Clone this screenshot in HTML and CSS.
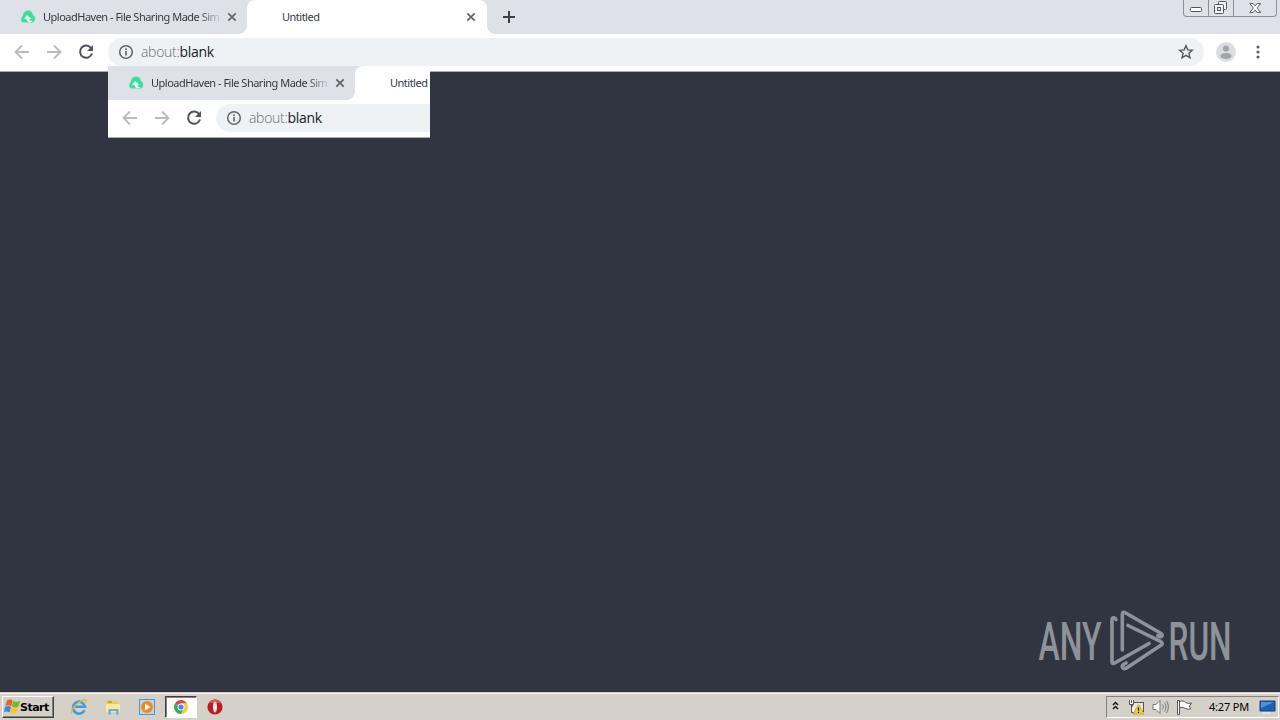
FILE: index.html
```
<!DOCTYPE html>
<html lang="en">
<head>
    <meta charset="UTF-8">
    <title>Untitled</title>
    <link rel="stylesheet" href="styles.css">
</head>
<body>
    <!-- shared icons -->
    <svg class="defs" width="0" height="0">
        <symbol id="cloud" viewBox="0 0 16 16">
            <path d="M4 13.500C2 13.500 1 12 1.300 10 1.500 8.500 2 7.500 3 7 3 3.800 5 1.500 8 1.500c3 0 4.700 2 5 4.500 2 1 2.500 2.800 2 4.500-.3 2-1.500 3-3 3z" fill="#3fdca0"/>
            <path d="M7 6l4.500 4H9.300c.3 1.500 1.500 2 3.500 2.200-2.500 2-5.800 1.500-6.300-2.200H4z" fill="#e6f5f1"/>
        </symbol>
        <symbol id="close" viewBox="0 0 10 10"><path d="M1.300 1.300l7.400 7.400M8.700 1.300L1.300 8.700" stroke="#606367" stroke-width="1.700"/></symbol>
        <symbol id="back" viewBox="0 0 16 16"><path d="M15 8H2M8 1.500L1.500 8 8 14.500" fill="none" stroke="#b9bbbe" stroke-width="1.800"/></symbol>
        <symbol id="reload" viewBox="0 0 16 16">
            <path d="M13.200 4.200A6.100 6.100 0 1 0 14 9.500" fill="none" stroke="#505357" stroke-width="2"/>
            <path d="M15 1v6H9z" fill="#505357"/>
        </symbol>
        <symbol id="info" viewBox="0 0 16 16">
            <circle cx="8" cy="8" r="6.300" fill="none" stroke="#5f6368" stroke-width="1.500"/>
            <path d="M8 7v4.500M8 4.300v1.700" stroke="#5f6368" stroke-width="1.600"/>
        </symbol>
    </svg>

    <div class="desktop">
        <div class="browser">
            <div class="tabstrip">
                <div class="tab">
                    <svg class="favicon"><use href="#cloud"/></svg>
                    <span class="tab-title">UploadHaven - File Sharing Made Sim</span>
                    <svg class="tab-close"><use href="#close"/></svg>
                </div>
                <div class="tab active">
                    <span class="tab-title">Untitled</span>
                    <svg class="tab-close"><use href="#close"/></svg>
                </div>
                <svg class="new-tab" viewBox="0 0 12 12"><path d="M6 0v12M0 6h12" stroke="#3c4043" stroke-width="2"/></svg>
                <div class="window-buttons">
                    <span class="win-min"><svg width="13" height="6"><rect x=".5" y=".5" width="11" height="4" rx="1" fill="#fff" stroke="#50545c"/></svg></span>
                    <span class="win-restore"><svg width="14" height="14"><g fill="#f4f5f7" stroke="#50545c"><rect x="4.500" y=".5" width="8" height="8" rx="1"/><rect x=".5" y="3.500" width="9" height="9" rx="1"/><rect x="3.500" y="6.500" width="3" height="3"/></g></svg></span>
                    <span class="win-close"><svg width="13" height="11"><path d="M.7.500h3.500l2 2.500 2-2.500h3.500L8 5l3.700 4.500H8.200L6.200 7l-2 2.500H.7L4.400 5z" fill="#fff" stroke="#50545c" stroke-width=".9"/></svg></span>
                </div>
            </div>
            <div class="toolbar">
                <svg class="nav"><use href="#back"/></svg>
                <svg class="nav forward"><use href="#back"/></svg>
                <svg class="nav"><use href="#reload"/></svg>
                <div class="omnibox">
                    <svg class="info"><use href="#info"/></svg>
                    <span class="url">about:<b>blank</b></span>
                    <svg class="star" viewBox="0 0 16 16"><path d="M8 1.700l1.800 4.200 4.600.4-3.500 3 1.100 4.500L8 11.400l-4 2.400 1.100-4.500-3.500-3 4.600-.4z" fill="none" stroke="#53575c" stroke-width="1.400"/></svg>
                </div>
                <svg class="avatar" viewBox="0 0 20 20"><circle cx="10" cy="10" r="10" fill="#dcdddf"/><circle cx="10" cy="6.500" r="3.100" fill="#a3a4a6"/><ellipse cx="10" cy="13.900" rx="5.600" ry="3" fill="#a3a4a6"/></svg>
                <svg class="menu" viewBox="0 0 4 14"><g fill="#55585c"><circle cx="2" cy="2" r="1.500"/><circle cx="2" cy="7" r="1.500"/><circle cx="2" cy="12" r="1.500"/></g></svg>
            </div>
        </div>

        <!-- stale piece of the window painted over the page -->
        <div class="ghost">
            <div class="tabstrip">
                <div class="tab">
                    <svg class="favicon"><use href="#cloud"/></svg>
                    <span class="tab-title">UploadHaven - File Sharing Made Sim</span>
                    <svg class="tab-close"><use href="#close"/></svg>
                </div>
                <div class="tab active">
                    <span class="tab-title">Untitled</span>
                </div>
            </div>
            <div class="toolbar">
                <svg class="nav"><use href="#back"/></svg>
                <svg class="nav forward"><use href="#back"/></svg>
                <svg class="nav"><use href="#reload"/></svg>
                <div class="omnibox">
                    <svg class="info"><use href="#info"/></svg>
                    <span class="url">about:<b>blank</b></span>
                </div>
            </div>
        </div>

        <svg class="watermark" width="200" height="66" viewBox="1037 608 200 66">
            <text x="1038.500" y="659.500" textLength="63" lengthAdjust="spacingAndGlyphs">ANY</text>
            <g fill="none" stroke="#8e9299" stroke-width="3.600" stroke-linejoin="round" stroke-linecap="round">
                <path d="M1116 619.500c-1-2.500-4-2.500-4 .5v41.500c0 2 1 2.500 2.700 1.500L1149 643.500"/>
                <path d="M1122.300 650V614.500c0-2.200 1.300-2.800 3-1.800l35.500 20.500c3 2 .5 5-3 2.500"/>
                <path d="M1128 625.500L1160.500 641.300c2.300 1.200 2.300 3 0 4.300L1126.500 668c-3.500 2.200-5.500-1.500-3-3.500L1126 663"/>
            </g>
            <text x="1168.500" y="659.500" textLength="63" lengthAdjust="spacingAndGlyphs">RUN</text>
        </svg>

        <div class="taskbar">
            <div class="start">
                <svg width="17" height="16" viewBox="0 0 17 16">
                    <path d="M3 1.500c2-1.500 4-1.300 5.800 0L7.200 7.300C5 6 3.500 6 1.300 7z" fill="#e8622a"/>
                    <path d="M9.200 2c2 1.200 4.500 1.100 7-.3L14.500 7.400c-2.500 1.400-4.800 1.300-6.800.2z" fill="#79b82e"/>
                    <path d="M1.100 7.700c2.200-1.100 3.900-1 5.900.2L5.400 13.500c-2-1.200-3.700-1.200-5.400-.2z" fill="#3e86d8"/>
                    <path d="M7.500 8.200c2 1.200 4.300 1.200 6.800-.1L12.700 13.700c-2.500 1.300-4.800 1.200-6.800.1z" fill="#f8c62b"/>
                </svg>
                <span>Start</span>
            </div>
            <div class="quick">
                <svg viewBox="0 0 18 18">
                    <path d="M14.500 12.300A6 6 0 1 1 15 8.700H5" fill="none" stroke="#3a9fe0" stroke-width="2.600"/>
                    <path d="M2 15.800C-.8 13 7 4.500 13 2.200c3-1.200 4.200.3 2.800 2.500" fill="none" stroke="#e6b93c" stroke-width="1.400"/>
                </svg>
                <svg viewBox="0 0 18 18">
                    <path d="M2 2h5l1 1.500h7V14H2z" fill="#efc85f"/>
                    <path d="M2 6h14v8H2z" fill="#fbe89f"/>
                    <path d="M4.500 16.500V11h10v5.500h-2.500V13H7v3.500z" fill="#63b2dc"/>
                    <path d="M4 4h4" stroke="#50a050"/>
                </svg>
                <svg viewBox="0 0 18 18">
                    <rect x="1.500" y="1.500" width="15" height="15" fill="#b9d6ee" stroke="#5795cc"/>
                    <circle cx="9" cy="9" r="6" fill="#f28a16"/>
                    <path d="M7 5.500l5.500 3.500L7 12.500z" fill="#fff"/>
                </svg>
                <div class="pressed">
                    <svg viewBox="0 0 18 18">
                        <path d="M9 9L3 5.500A7 7 0 0 1 15 5.500H9z" fill="#dd4b3e"/>
                        <path d="M9 9V5.500h6A7 7 0 0 1 9 16l3-5.300z" fill="#f7cb3c"/>
                        <path d="M9 9l3 1.700L9 16A7 7 0 0 1 3 5.500z" fill="#3ba55c"/>
                        <circle cx="9" cy="9" r="3.500" fill="#fff"/>
                        <circle cx="9" cy="9" r="2.600" fill="#4285f4"/>
                    </svg>
                </div>
                <svg viewBox="0 0 18 18">
                    <circle cx="9" cy="9" r="7.600" fill="#b91d20"/>
                    <path d="M3 5a7 7 0 0 1 12 0z" fill="#d95552"/>
                    <ellipse cx="9" cy="9" rx="2" ry="5.500" fill="#f6e9e5"/>
                </svg>
            </div>
            <div class="tray">
                <svg class="chevrons" viewBox="0 0 7 9"><path d="M1 4l2.500-2.500L6 4M1 8l2.500-2.500L6 8" fill="none" stroke="#111" stroke-width="1.400"/></svg>
                <svg class="network" viewBox="0 0 17 16">
                    <rect x="4.500" y="3.500" width="11" height="9" fill="#e8e6e0" stroke="#555"/>
                    <path d="M1.500 1v4.500h4V1M3.500 1v3M3.500 6v7.500H8" fill="#fff" stroke="#555"/>
                    <path d="M10.500 5.500L16 15H5z" fill="#f6d32d" stroke="#b8960f" stroke-width=".7"/>
                    <path d="M10.500 8.500v3.300M10.500 12.700v1.300" stroke="#222" stroke-width="1.300"/>
                </svg>
                <svg class="volume" viewBox="0 0 17 16">
                    <path d="M1 5.500h3l4-4v13l-4-4H1z" fill="#fff" stroke="#777"/>
                    <path d="M10.500 5.500c1 1.500 1 3.500 0 5M12.500 3.500c2 3 2 6 0 9M14.500 2c2.500 4 2.500 8 0 12" fill="none" stroke="#777"/>
                </svg>
                <svg class="flag" viewBox="0 0 17 16"><path d="M1.500 15.500V1.500h2v14zM3.500 2.500c3-1 4.500-.5 6 1 2 1 4 1 6 .5l-2 3 1 3c-3 .5-4 0-6-1s-3-1-5 0z" fill="#fff" stroke="#555"/></svg>
                <span class="clock">4:27 PM</span>
                <svg class="monitor" viewBox="0 0 17 14">
                    <path d="M1 1h15v10H1z" fill="#1d61b7" stroke="#163c75"/>
                    <path d="M2 2h13L2 8z" fill="#4b94dc"/>
                    <path d="M4 13h8" stroke="#dfe7ef" stroke-width="1.500"/>
                </svg>
            </div>
        </div>
    </div>
</body>
</html>
```
FILE: styles.css
```
body {
    margin: 0;
    font-family: "Noto Sans", sans-serif;
    background: #313541;
    overflow: hidden;
}

svg {
    display: block;
    flex: none;
}

.defs {
    position: absolute;
}

.desktop {
    position: relative;
    display: flex;
    flex-direction: column;
    height: 720px;
}

.tabstrip {
    display: flex;
    height: 34px;
    background: #dee1e7;
}

.tab {
    display: flex;
    align-items: center;
    box-sizing: border-box;
    flex: none;
    width: 247px;
    padding: 0 10px 0 20px;
}

.tab.active {
    position: relative;
    width: 240px;
    padding: 0 11px 0 35px;
    border-radius: 8px 8px 0 0;
    background: #fff;
}

/* curved feet of the active tab */
.tab.active::before,
.tab.active::after {
    content: "";
    position: absolute;
    bottom: 0;
    width: 8px;
    height: 8px;
}

.tab.active::before {
    left: -8px;
    background: radial-gradient(circle at 0 0, #dee1e7 7.5px, #fff 8px);
}

.tab.active::after {
    right: -8px;
    background: radial-gradient(circle at 100% 0, #dee1e7 7.5px, #fff 8px);
}

.favicon {
    width: 16px;
    height: 16px;
    margin-right: 7px;
}

.tab-title {
    padding-bottom: 2px;
    white-space: nowrap;
    font-size: 11px;
    letter-spacing: -0.5px;
    color: #35383c;
}

/* long titles fade out before the close button */
.favicon + .tab-title {
    -webkit-mask-image: linear-gradient(to right, #000 155px, transparent 180px);
}

.tab-close {
    width: 10px;
    height: 10px;
    margin-left: auto;
}

.new-tab {
    width: 12px;
    height: 12px;
    margin: 11px 0 0 16px;
}

.window-buttons {
    display: flex;
    box-sizing: border-box;
    width: 94px;
    height: 17px;
    margin: 0 3px 0 auto;
    border: 1px solid #8b8f98;
    border-top: none;
    border-radius: 0 0 4px 4px;
}

.window-buttons span {
    display: flex;
    justify-content: center;
    align-items: center;
}

.win-min {
    width: 24px;
    padding-top: 4px;
    border-right: 1px solid #8b8f98;
}

.win-restore {
    width: 24px;
    border-right: 1px solid #8b8f98;
}

.win-close {
    flex: 1;
}

.toolbar {
    display: flex;
    align-items: center;
    box-sizing: border-box;
    height: 38px;
    padding: 0 20px 1px 14px;
    border-bottom: 1px solid #a9abaf;
    background: #fff;
}

.nav {
    width: 16px;
    height: 16px;
    margin-right: 16px;
}

.forward {
    transform: scaleX(-1);
}

.omnibox {
    display: flex;
    align-items: center;
    box-sizing: border-box;
    flex: 1;
    height: 28px;
    margin-left: -2px;
    padding: 0 10px;
    border-radius: 14px;
    background: #eff2f5;
}

.info {
    width: 16px;
    height: 16px;
    margin-right: 7px;
}

.url {
    padding-bottom: 2px;
    font-family: "Open Sans", sans-serif;
    font-size: 14px;
    font-weight: 300;
    letter-spacing: -0.3px;
    color: #686c71;
}

.url b {
    font-weight: 400;
    color: #17191c;
}

.star {
    width: 16px;
    height: 16px;
    margin-left: auto;
}

.avatar {
    width: 20px;
    height: 20px;
    margin-left: 12px;
}

.menu {
    width: 4px;
    height: 14px;
    margin-left: 20px;
}

.ghost {
    position: absolute;
    left: 108px;
    top: 66px;
    width: 322px;
    height: 72px;
    overflow: hidden;
}

.ghost .toolbar {
    padding-right: 0;
}

.ghost .omnibox {
    border-radius: 14px 0 0 14px;
}

.watermark {
    position: absolute;
    left: 1037px;
    top: 608px;
}

.watermark text {
    font-family: Roboto, sans-serif;
    font-size: 53px;
    font-weight: 500;
    fill: #8e9299;
}

.taskbar {
    display: flex;
    align-items: center;
    box-sizing: border-box;
    height: 28px;
    margin-top: auto;
    padding: 2px 1px 0 2px;
    background: #d5d1c9;
    box-shadow: inset 0 1px #d5d1c9, inset 0 2px #f7f5f1;
}

.start {
    display: flex;
    align-items: center;
    box-sizing: border-box;
    width: 52px;
    height: 22px;
    padding-left: 1px;
    border: 1px solid;
    border-color: #fff #404040 #404040 #fff;
    box-shadow: inset -1px -1px #85827c;
    font-family: "DejaVu Sans", sans-serif;
    font-size: 11px;
    font-weight: bold;
    letter-spacing: -0.5px;
    color: #000;
}

.start span {
    margin-left: -1px;
}

.quick {
    display: flex;
    align-items: center;
    margin-left: 16px;
}

.quick svg {
    width: 18px;
    height: 18px;
    margin-right: 16px;
}

.pressed {
    display: flex;
    justify-content: center;
    align-items: center;
    box-sizing: border-box;
    width: 32px;
    height: 22px;
    margin: 0 9px 0 -7px;
    border: 1px solid;
    border-color: #404040 #fff #fff #404040;
    box-shadow: inset 1px 1px #85827c;
    background: #fdfdfc;
}

.pressed svg {
    margin: 0;
}

.tray {
    display: flex;
    align-items: center;
    box-sizing: border-box;
    width: 173px;
    height: 22px;
    margin-left: auto;
    padding: 0 2px 0 5px;
    border: 1px solid;
    border-color: #85827c #fff #fff #85827c;
}

.chevrons {
    width: 7px;
    height: 9px;
    margin: 0 9px 3px 0;
}

.network,
.volume,
.flag {
    width: 17px;
    height: 16px;
    margin-right: 7px;
}

.clock {
    margin-left: 9px;
    padding-bottom: 1px;
    white-space: nowrap;
    font-size: 11px;
    letter-spacing: -0.2px;
    color: #000;
}

.monitor {
    width: 17px;
    height: 14px;
    margin-left: auto;
}
```
